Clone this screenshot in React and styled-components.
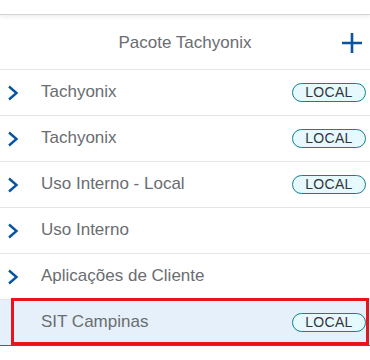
import React from 'react'
import styled, { createGlobalStyle } from 'styled-components'

const GlobalStyle = createGlobalStyle`
  html, body {
    margin: 0;
    padding: 0;
    background: #fff;
  }
  * {
    box-sizing: border-box;
    font-family: "Liberation Sans", Arial, sans-serif;
  }
`

const Page = styled.div`
  width: 370px;
  height: 360px;
  overflow: hidden;
  background: #fff;
`

const TopBar = styled.div`
  height: 15px;
  border-bottom: 1px solid #d4d4d4;
  box-shadow: 0 2px 4px rgba(0, 0, 0, 0.07);
  position: relative;
`

const Header = styled.div`
  height: 55px;
  display: flex;
  align-items: center;
  justify-content: center;
  position: relative;
  border-bottom: 1px solid #e5e5e5;
  padding-top: 2px;
`

const Title = styled.span`
  font-size: 17px;
  color: #6a6d70;
`

const AddButton = styled.button`
  position: absolute;
  right: 7px;
  top: 17px;
  width: 22px;
  height: 22px;
  border: 0;
  padding: 0;
  background: transparent;
  display: flex;
  align-items: center;
  justify-content: center;
`

const List = styled.div`
  display: flex;
  flex-direction: column;
`

const Row = styled.div`
  height: 46px;
  display: flex;
  align-items: center;
  padding: 0 4px 0 7px;
  border-bottom: 1px solid ${p => (p.selected ? '#0a6ed1' : '#e5e5e5')};
  background: ${p => (p.selected ? '#e5f0fa' : '#fff')};
  position: relative;

  ${p => p.highlight && `
    &::after {
      content: '';
      position: absolute;
      left: 11px;
      right: 1px;
      top: -2px;
      bottom: 0px;
      border: 3px solid #e8141c;
    }
  `}
`

const Arrow = styled.span`
  width: 34px;
  flex: none;
  display: flex;
  align-items: center;
`

const Label = styled.span`
  flex: 1;
  font-size: 17px;
  color: #6a6d70;
  white-space: nowrap;
  padding-bottom: 2px;
`

const Badge = styled.span`
  flex: none;
  width: 74px;
  height: 19px;
  border: 1px solid #0f828f;
  border-radius: 10px;
  background: #e6f9fd;
  color: #32363a;
  font-size: 14px;
  line-height: 17px;
  text-align: center;
  letter-spacing: 0.3px;
`

const Chevron = () => (
  <svg width="12" height="16" viewBox="0 0 12 16">
    <path d="M2 1.5 L9.5 8 L2 14.5" fill="none" stroke="#0854a0" strokeWidth="2.4" />
  </svg>
)

const Plus = () => (
  <svg width="20" height="20" viewBox="0 0 20 20">
    <path d="M10 0 V20 M0 10 H20" stroke="#0854a0" strokeWidth="2.6" />
  </svg>
)

const items = [
  { name: 'Tachyonix', local: true, arrow: true },
  { name: 'Tachyonix', local: true, arrow: true },
  { name: 'Uso Interno - Local', local: true, arrow: true },
  { name: 'Uso Interno', arrow: true },
  { name: 'Aplicações de Cliente', arrow: true },
  { name: 'SIT Campinas', local: true, selected: true },
  { name: 'Produtivo', arrow: true },
]

export default function App() {
  return (
    <Page>
      <GlobalStyle />
      <TopBar />
      <Header>
        <Title>Pacote Tachyonix</Title>
        <AddButton><Plus /></AddButton>
      </Header>
      <List>
        {items.map((it, i) => (
          <Row key={i} selected={it.selected} highlight={it.selected}>
            <Arrow>{it.arrow && <Chevron />}</Arrow>
            <Label>{it.name}</Label>
            {it.local && <Badge>LOCAL</Badge>}
          </Row>
        ))}
      </List>
    </Page>
  )
}
